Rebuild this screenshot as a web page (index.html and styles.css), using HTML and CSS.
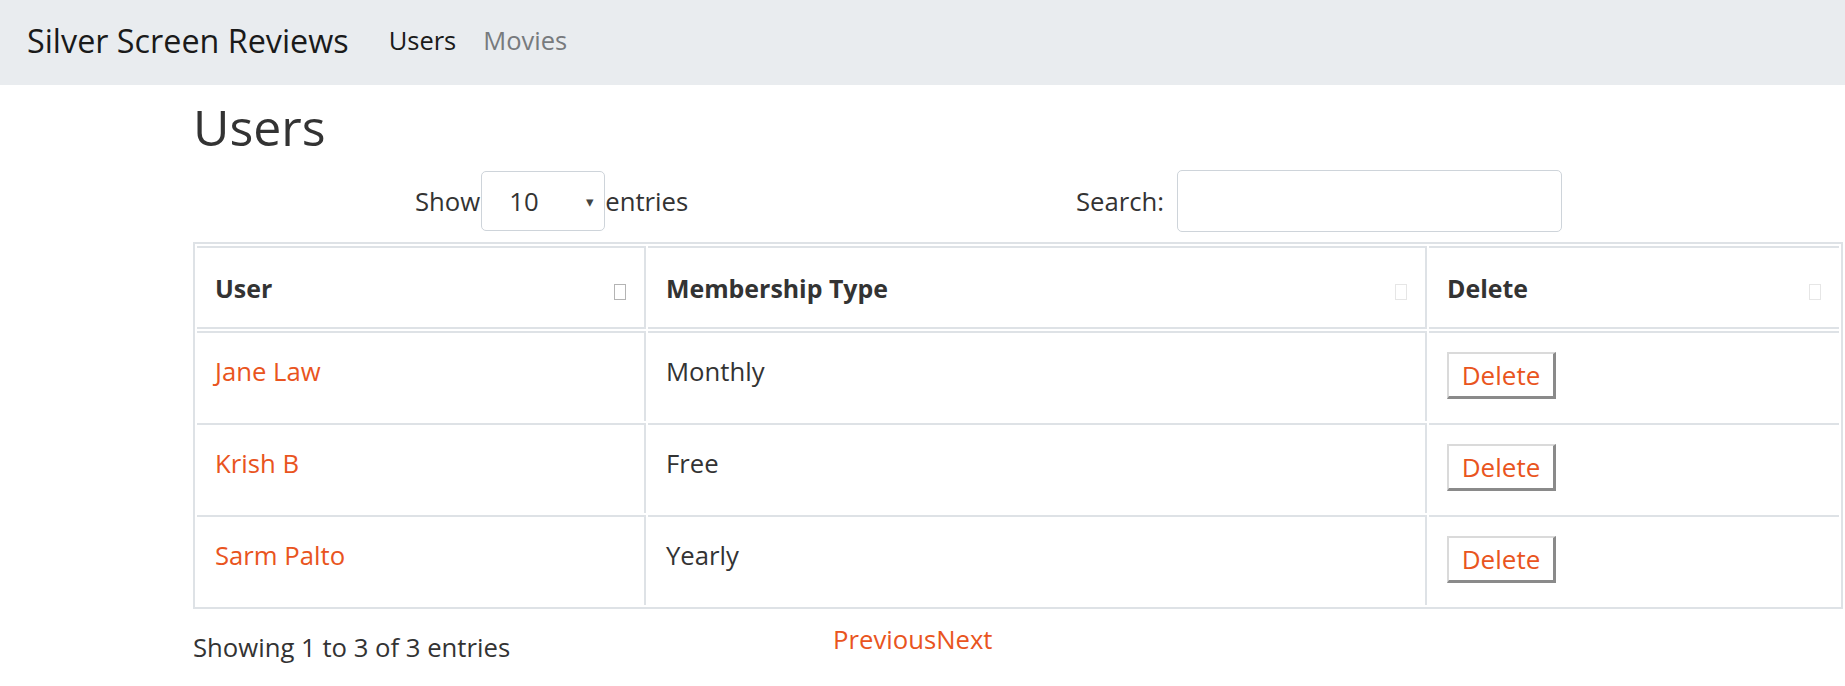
FILE: index.html
```html
<!DOCTYPE html>
<html lang="en">
<head>
<meta charset="utf-8">
<title>Silver Screen Reviews - Users</title>
<link rel="stylesheet" href="styles.css">
</head>
<body>
<nav class="navbar">
  <a class="brand" href="#">Silver Screen Reviews</a>
  <a class="nav-link active" href="#">Users</a>
  <a class="nav-link" href="#">Movies</a>
</nav>
<main class="content">
  <h1 class="page-title">Users</h1>
  <div class="dt-controls">
    <div class="dt-length">
      <span>Show</span>
      <div class="select-box"><span class="select-value">10</span><span class="caret">&#9662;</span></div>
      <span>entries</span>
    </div>
    <div class="dt-search">
      <span>Search:</span>
      <div class="search-input"></div>
    </div>
  </div>
  <table class="users-table">
    <colgroup>
      <col class="c1"><col class="c2"><col class="c3">
    </colgroup>
    <thead>
      <tr>
        <th><div class="th-inner"><span>User</span><span class="sort-box dark"></span></div></th>
        <th><div class="th-inner"><span>Membership Type</span><span class="sort-box"></span></div></th>
        <th class="last"><div class="th-inner"><span>Delete</span><span class="sort-box"></span></div></th>
      </tr>
    </thead>
    <tbody>
      <tr>
        <td><a href="#" class="user-link">Jane Law</a></td>
        <td>Monthly</td>
        <td class="last btn-cell"><button class="del-btn">Delete</button></td>
      </tr>
      <tr>
        <td><a href="#" class="user-link">Krish B</a></td>
        <td>Free</td>
        <td class="last btn-cell"><button class="del-btn">Delete</button></td>
      </tr>
      <tr>
        <td><a href="#" class="user-link">Sarm Palto</a></td>
        <td>Yearly</td>
        <td class="last btn-cell"><button class="del-btn">Delete</button></td>
      </tr>
    </tbody>
  </table>
  <div class="dt-footer">
    <div class="dt-info">Showing 1 to 3 of 3 entries</div>
    <div class="dt-paging"><a href="#">Previous</a><a href="#">Next</a></div>
  </div>
</main>
</body>
</html>
```
FILE: styles.css
```css
* { box-sizing: border-box; }
html, body { margin: 0; padding: 0; }
body {
  font-family: "Open Sans", "Noto Sans", sans-serif;
  font-size: 25.7px;
  color: #333333;
  background: #ffffff;
}
a { text-decoration: none; }

.navbar {
  height: 85px;
  background: #e9ecef;
  display: flex;
  align-items: center;
  padding-left: 27px;
  padding-bottom: 5px;
}
.brand {
  font-size: 32.3px;
  color: #1a1a1a;
  margin-right: 40px;
}
.nav-link {
  font-size: 25.5px;
  color: #777a7d;
  margin-right: 27px;
}
.nav-link.active { color: #1a1a1a; }

.content { padding-left: 193px; }

.page-title {
  margin: 0;
  padding-top: 12px;
  height: 84px;
  font-size: 50px;
  font-weight: 400;
  line-height: 60px;
  color: #333333;
}

.dt-controls {
  display: flex;
  align-items: center;
  height: 68px;
  padding-bottom: 4px;
  width: 1369px;
}
.dt-length {
  display: flex;
  align-items: center;
  margin-left: 222px;
}
.select-box {
  width: 124px;
  height: 60px;
  border: 1px solid #ced4da;
  border-radius: 5px;
  display: flex;
  align-items: center;
  justify-content: space-between;
  padding: 0 10px 0 27px;
  margin: 0 0 0 1px;
}
.caret { font-size: 15px; color: #444; }
.dt-search {
  margin-left: auto;
  display: flex;
  align-items: center;
}
.search-input {
  width: 385px;
  height: 62px;
  border: 1px solid #ced4da;
  border-radius: 5px;
  margin-left: 13px;
}

.users-table {
  margin-top: 5px;
  width: 1650px;
  table-layout: fixed;
  border-collapse: separate;
  border-spacing: 2px;
  border: 2px solid #dee2e6;
}
.users-table col.c1 { width: 449px; }
.users-table col.c2 { width: 779px; }
.users-table col.c3 { width: 410px; }
.users-table th,
.users-table td {
  border-top: 2px solid #dee2e6;
  border-right: 2px solid #dee2e6;
  text-align: left;
  padding: 0 18px;
}
.users-table th.last,
.users-table td.last { border-right: none; }
.users-table th {
  height: 83px;
  border-bottom: 2px solid #dee2e6;
  vertical-align: middle;
  font-weight: 700;
  font-size: 24.9px;
}
.th-inner {
  display: flex;
  align-items: center;
  justify-content: space-between;
}
.sort-box {
  width: 12px;
  height: 16px;
  border: 1px solid #e6e6e6;
  margin-top: 8px;
}
.sort-box.dark { border-color: #b4b4b4; }
.users-table td {
  height: 90px;
  vertical-align: top;
  padding-top: 21px;
  line-height: 36px;
}
.users-table td.btn-cell { padding-top: 19px; }
.user-link { color: #e95420; }
.del-btn {
  display: block;
  width: 109px;
  height: 47px;
  background: #ffffff;
  border: 2px solid;
  border-color: #dadada #8a8a8a #8a8a8a #dadada;
  border-width: 2px 3px 3px 2px;
  color: #e95420;
  font-family: inherit;
  font-size: 26px;
  line-height: 40px;
  padding: 0;
}

.dt-footer {
  display: flex;
  align-items: flex-start;
}
.dt-info {
  padding-top: 21px;
  width: 640px;
  line-height: 36px;
}
.dt-paging {
  padding-top: 13px;
  line-height: 36px;
}
.dt-paging a { color: #e95420; }
```
